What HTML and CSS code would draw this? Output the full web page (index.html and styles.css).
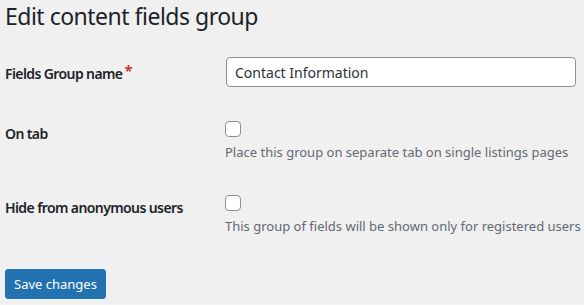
FILE: index.html
```html
<!DOCTYPE html>
<html lang="en">
<head>
  <meta charset="UTF-8" />
  <meta name="viewport" content="width=device-width, initial-scale=1.0"/>
  <title>Edit content fields group</title>
  <link rel="stylesheet" href="styles.css">
</head>
<body>

  <div class="wrap">
    <h1>Edit content fields group</h1>

    <form>
      <table class="form-table">
        <tr>
          <th><label for="group-name">Fields Group name<span class="required">*</span></label></th>
          <td><input type="text" id="group-name" class="regular-text" value="Contact Information"></td>
        </tr>
        <tr>
          <th><label for="on-tab">On tab</label></th>
          <td>
            <input type="checkbox" id="on-tab">
            <p class="description">Place this group on separate tab on single listings pages</p>
          </td>
        </tr>
        <tr>
          <th><label for="hide-anon">Hide from anonymous users</label></th>
          <td>
            <input type="checkbox" id="hide-anon">
            <p class="description">This group of fields will be shown only for registered users</p>
          </td>
        </tr>
      </table>

      <p class="submit">
        <button type="button" class="button-primary">Save changes</button>
      </p>
    </form>
  </div>

</body>
</html>
```

FILE: styles.css
```css
:root {
  --bg: #f0f0f1;
  --text: #1d2327;
  --muted: #646970;
  --border: #8c8f94;
  --accent: #2271b1;
  --required: #d63638;
}

body {
  margin: 0;
  font-family: "Noto Sans", sans-serif;
  background-color: var(--bg);
  color: var(--text);
  font-size: 14px;
}

.wrap {
  padding-left: 5px;
}

h1 {
  margin: 0 0 10px;
  font-size: 23px;
  font-weight: 400;
  line-height: 32px;
  letter-spacing: -0.5px;
}

.form-table {
  border-collapse: collapse;
  border-spacing: 0;
}

.form-table th {
  width: 200px;
  padding: 23px 10px 0 0;
  text-align: left;
  vertical-align: top;
  font-weight: 600;
  line-height: 1.3;
  letter-spacing: -0.6px;
  white-space: nowrap;
}

.form-table td {
  padding: 15px 0 15px 10px;
  vertical-align: top;
  line-height: 1.3;
}

.required {
  margin-left: 2px;
  color: var(--required);
  font-size: 15px;
  font-weight: 700;
  vertical-align: 3px;
  line-height: 0;
}

.regular-text {
  display: block;
  box-sizing: border-box;
  width: 350px;
  height: 30px;
  margin: 0 1px;
  padding: 0 8px;
  font-family: inherit;
  font-size: 14px;
  color: #2c3338;
  background: #fff;
  border: 1px solid var(--border);
  border-radius: 4px;
}

input[type="checkbox"] {
  appearance: none;
  display: block;
  box-sizing: border-box;
  width: 16px;
  height: 16px;
  margin: 4px 0 0;
  background: #fff;
  border: 1px solid var(--border);
  border-radius: 4px;
}

.description {
  margin: 6px 0 0;
  font-size: 13px;
  line-height: 18px;
  color: var(--muted);
  white-space: nowrap;
}

.submit {
  margin: 19px 0 0;
}

.button-primary {
  height: 30px;
  padding: 0 8px;
  font-family: inherit;
  font-size: 13px;
  color: #fff;
  background: var(--accent);
  border: 1px solid var(--accent);
  border-radius: 3px;
  cursor: pointer;
}
```
